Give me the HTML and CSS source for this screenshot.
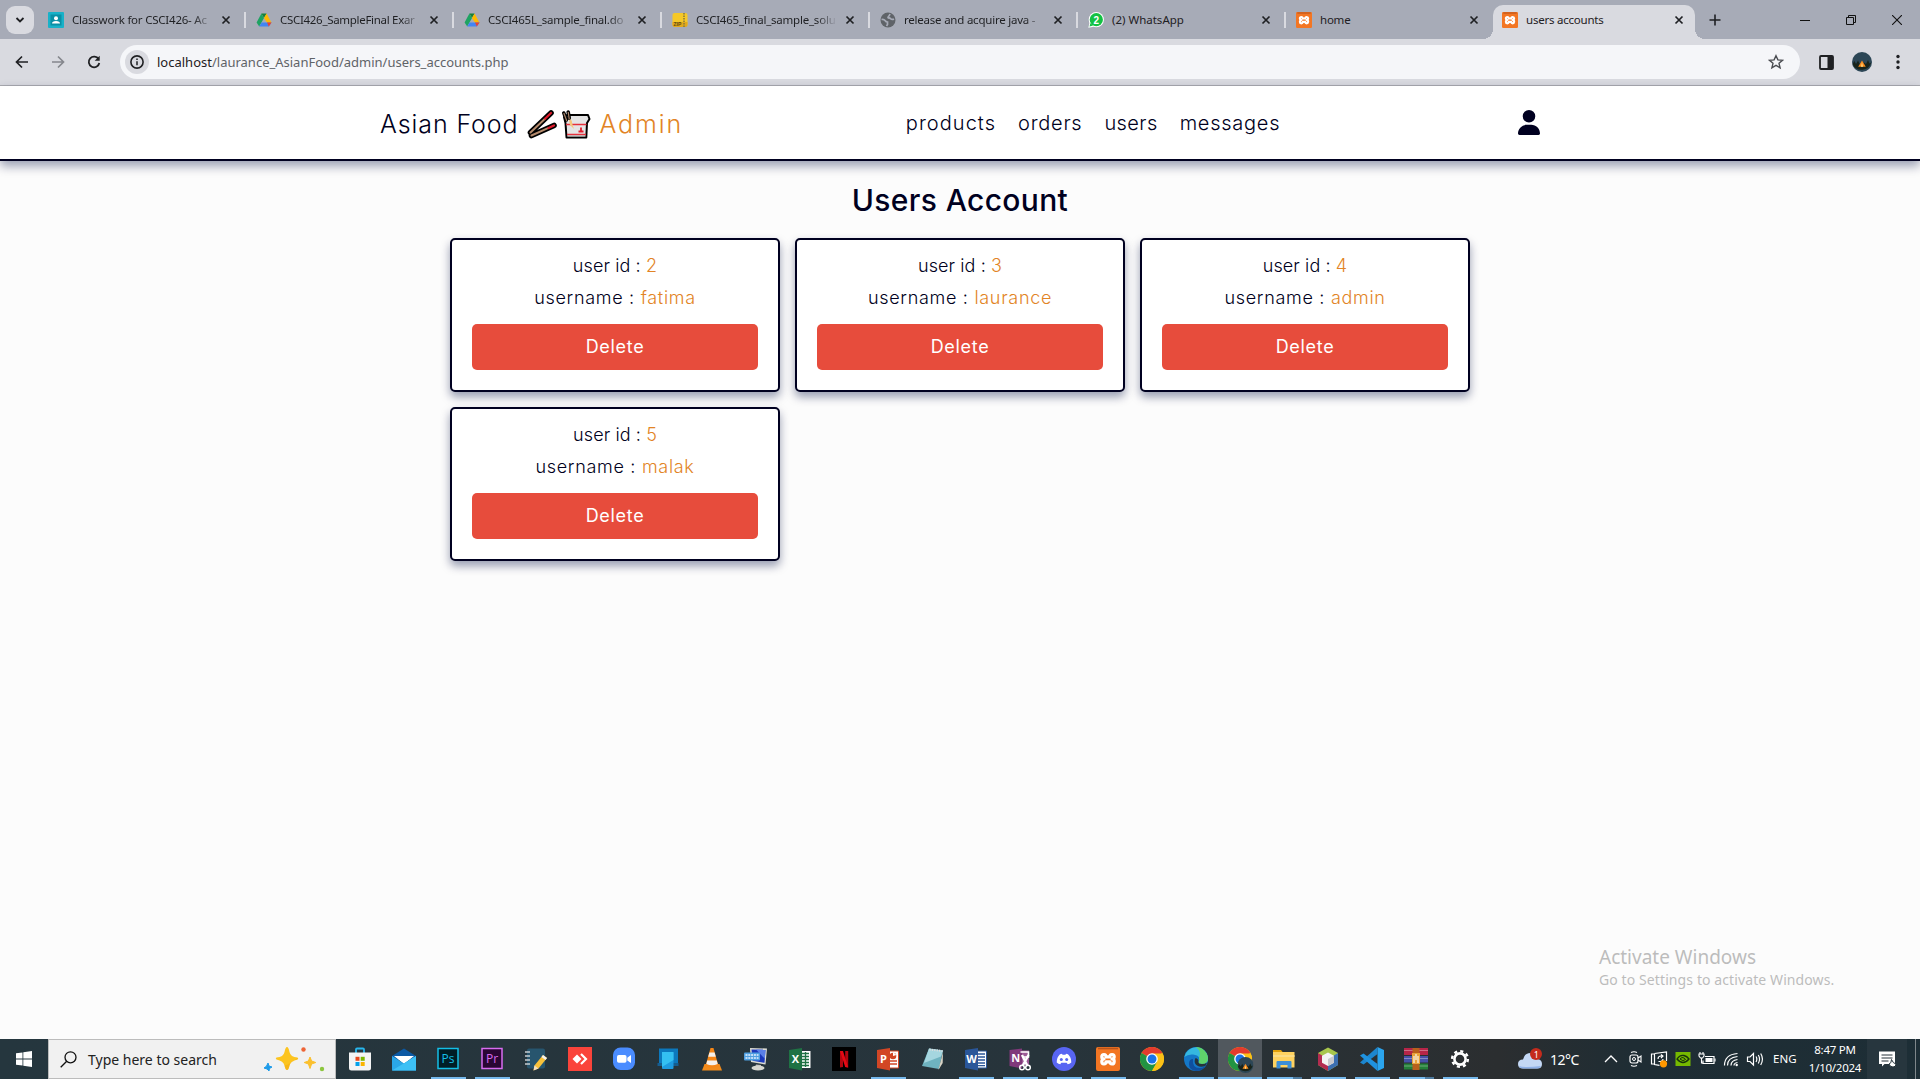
FILE: index.html
```
<!DOCTYPE html>
<html lang="en">
<head>
<meta charset="utf-8">
<title>users accounts</title>
<link rel="stylesheet" href="styles.css">
</head>
<body>
<svg class="defs" width="0" height="0">
  <symbol id="close" viewBox="0 0 10 10"><path d="M1.5 1.5l7 7M8.5 1.5l-7 7" stroke="#1f2023" stroke-width="1.7" fill="none"/></symbol>
  <symbol id="drive" viewBox="0 0 16 16"><path d="M5.4 1.5h5.2L8 6z" fill="#188038"/><path d="M5.4 1.5L0.6 10.5 3.2 14.5 8 6z" fill="#1ea362"/><path d="M10.6 1.5L8 6l3.2 5h4.4z" fill="#ffba00"/><path d="M3.2 14.5h9.6l2.7-4H5.6z" fill="#4285f4"/><path d="M11 10.5h4.5l-2.7 4z" fill="#ea4335"/></symbol>
  <symbol id="xampp" viewBox="0 0 24 24"><rect width="24" height="24" rx="2" fill="#f37623"/><path d="M2 1.5h20" stroke="#b9541b" stroke-width="1.6"/><path d="M8 7.5q-2.200 0-2.200 2.200T8 12q-2.200.2-2.200 2.500T8 17q2 0 2-2.200h4q0 2.200 2 2.200t2.200-2.500T16 12q2.200-.2 2.200-2.300T16 7.500t-2 2.300h-4q0-2.300-2-2.300z" fill="none" stroke="#fff" stroke-width="3.200" stroke-linejoin="round"/></symbol>
  <symbol id="chrome" viewBox="0 0 24 24"><circle cx="12" cy="12" r="12" fill="#fbc116"/><path d="M12 12L1.600 6A12 12 0 0 1 22.400 6z" fill="#e33b2e"/><path d="M1.600 6A12 12 0 0 0 12 24l5.200-9z" fill="#229342"/><path d="M12 6.500h10.700A12 12 0 0 1 12 24l5-9z" fill="#fbc116"/><circle cx="12" cy="12" r="5.800" fill="#fff"/><circle cx="12" cy="12" r="4.500" fill="#1a73e8"/></symbol>
  <symbol id="camp" viewBox="0 0 20 20"><circle cx="10" cy="10" r="10" fill="#2c4656"/><path d="M.5 12l2-3 1.500 3 2-3.500 2 4 4-2 2 1.500 2-4 1.500 3.500 1.700-1A10 10 0 0 1 .5 12z" fill="#18241b"/><path d="M10 8.500l3.800 6.300H6.200z" fill="#f58a1d"/><path d="M10 10.500l1 4.300H9z" fill="#ffe08a"/></symbol>
</svg>

<div class="tabstrip">
  <div class="tabsearch"><svg width="10" height="8" viewBox="0 0 10 8"><path d="M1.500 2L5 5.500 8.500 2" fill="none" stroke="#1f2023" stroke-width="1.800"/></svg></div>
  <div class="tab"><svg class="fav" viewBox="0 0 16 16"><rect width="16" height="16" rx="1" fill="#18b1c8"/><rect x="2.500" y="2.500" width="11" height="11" fill="#0b8fa5"/><circle cx="8" cy="6.200" r="2" fill="#fff"/><path d="M4 11.500q0-2.500 4-2.500t4 2.500z" fill="#fff"/></svg><span class="tt fade">Classwork for CSCI426- Ac</span><svg class="x"><use href="#close"/></svg></div>
  <div class="tab"><svg class="fav"><use href="#drive"/></svg><span class="tt fade tight">CSCI426_SampleFinal Exar</span><svg class="x"><use href="#close"/></svg></div>
  <div class="tab"><svg class="fav"><use href="#drive"/></svg><span class="tt fade">CSCI465L_sample_final.do</span><svg class="x"><use href="#close"/></svg></div>
  <div class="tab"><svg class="fav" viewBox="0 0 16 16"><rect x=".5" y="1" width="15" height="13.500" rx="2" fill="#f5c828"/><path d="M.5 10h15v3q0 2-2 2h-11q-2 0-2-2z" fill="#e2a91b"/><path d="M12 1v14" stroke="#8a7a3a" stroke-width="1.600" stroke-dasharray="1.500 1"/><text x="1.500" y="14" class="zip">ZIP</text></svg><span class="tt fade">CSCI465_final_sample_solu</span><svg class="x"><use href="#close"/></svg></div>
  <div class="tab"><svg class="fav" viewBox="0 0 16 16"><circle cx="8" cy="8" r="7.500" fill="#5f6368"/><path d="M1.500 7.500q2.500-.5 3.500 1t2.500 1.500v2.500L6.500 14M14 7q-2 1-3.500-.3T8.500 6q-1-.5 0-1.500T10 2" stroke="#a7abb7" stroke-width="1.700" fill="none"/></svg><span class="tt fade">release and acquire java -</span><svg class="x"><use href="#close"/></svg></div>
  <div class="tab"><svg class="fav" viewBox="0 0 16 16"><circle cx="8.300" cy="7.700" r="7.600" fill="#fff"/><path d="M.3 15.800l1.300-5 4 4z" fill="#fff"/><circle cx="8.300" cy="7.700" r="6.600" fill="#13c143"/><path d="M1.500 14.600l1-3.600 2.600 2.600z" fill="#13c143"/><text x="8.300" y="11.500" class="badge2">2</text></svg><span class="tt wide">(2) WhatsApp</span><svg class="x"><use href="#close"/></svg></div>
  <div class="tab nosep"><svg class="fav"><use href="#xampp"/></svg><span class="tt">home</span><svg class="x"><use href="#close"/></svg></div>
  <div class="tab active"><svg class="fav"><use href="#xampp"/></svg><span class="tt">users accounts</span><svg class="x"><use href="#close"/></svg></div>
  <svg class="plus" width="12" height="12" viewBox="0 0 12 12"><path d="M6 .5v11M.5 6h11" stroke="#1f2023" stroke-width="1.600"/></svg>
  <div class="winctl">
    <svg width="10" height="10"><path d="M0 5.500h10" stroke="#111"/></svg>
    <svg width="10" height="10"><path d="M.5 2.500h7v7h-7zM2.500 2.500v-2h7v7h-2" fill="none" stroke="#111"/></svg>
    <svg width="10" height="10"><path d="M0 0l10 10M10 0L0 10" stroke="#111" stroke-width="1.100"/></svg>
  </div>
</div>

<div class="toolbar">
  <svg class="nav" viewBox="0 0 14 14"><path d="M13 7H1.800M7 1.500L1.500 7 7 12.500" fill="none" stroke="#1f2023" stroke-width="1.700"/></svg>
  <svg class="nav" viewBox="0 0 14 14"><path d="M1 7h11.200M7 1.500L12.500 7 7 12.500" fill="none" stroke="#85878d" stroke-width="1.700"/></svg>
  <svg class="nav" viewBox="0 0 14 14"><path d="M11.600 4.200A5.300 5.300 0 1 0 12.300 8" fill="none" stroke="#1f2023" stroke-width="1.800"/><path d="M12.700.8v5H7.700z" fill="#1f2023"/></svg>
  <div class="omnibox">
    <span class="info"><svg width="14" height="14" viewBox="0 0 14 14"><circle cx="7" cy="7" r="6.100" fill="none" stroke="#1f2023" stroke-width="1.600"/><path d="M7 6.200v4M7 3.400v1.700" stroke="#1f2023" stroke-width="1.500"/></svg></span>
    <span class="url"><b>localhost</b>/laurance_AsianFood/admin/users_accounts.php</span>
    <svg class="star" width="16" height="16" viewBox="0 0 16 16"><path d="M8 1.700l1.900 4.200 4.600.4-3.500 3 1.100 4.500L8 11.400l-4.100 2.400L5 9.300l-3.500-3 4.600-.4z" fill="none" stroke="#4a4c51" stroke-width="1.400"/></svg>
  </div>
  <svg width="15" height="15" viewBox="0 0 15 15"><rect x="1" y="1" width="13" height="13" rx="1" fill="none" stroke="#1f2023" stroke-width="1.800"/><path d="M8.500 1H14v13H8.500z" fill="#1f2023"/></svg>
  <svg class="avatar" width="20" height="20"><use href="#camp"/></svg>
  <svg class="dots" width="4" height="16" viewBox="0 0 4 16"><g fill="#1f2023"><circle cx="2" cy="2.500" r="1.700"/><circle cx="2" cy="8" r="1.700"/><circle cx="2" cy="13.500" r="1.700"/></g></svg>
</div>

<header class="header">
  <div class="bar">
    <a class="logo"><span class="l1">Asian Food</span>
      <svg width="30" height="30" viewBox="0 0 30 30"><path d="M3.500 23.500L24 4M4.500 26.500L27 16.500" stroke="#000" stroke-width="5.600" stroke-linecap="round"/><path d="M3.500 23.500L18 9.700M4.500 26.500L21 19.200" stroke="#b58a6c" stroke-width="2" stroke-linecap="round"/><path d="M18 9.700L24 4M21.500 19L27 16.500" stroke="#e01b2c" stroke-width="2.200" stroke-linecap="round"/></svg>
      <svg class="box" width="30" height="30" viewBox="0 0 30 30"><path d="M3 8L6 6h21l1.500 4-2.500 4-.7 14.500H5.500L4.500 14z" fill="#e4e4e4" stroke="#000" stroke-width="2" stroke-linejoin="round"/><path d="M5 15.500h20.500M6 25.500h19" stroke="#e5303c" stroke-width="1.400"/><path d="M6.500 27h18" stroke="#aaa"/><path d="M7.500 9q4 2 3.500 5l2 6-4-4-1-5z" fill="#f5c77c"/><path d="M2.800 4l2.500 7M7.200 3l1 6" stroke="#000" stroke-width="3.600" stroke-linecap="round"/><path d="M2.800 4l3 8M7.200 3l1 7" stroke="#a98469" stroke-width="1.200"/><path d="M20 18.500v3M17.500 22.500h5" stroke="#e01b2c" stroke-width="1.800"/></svg>
      <span class="l2">Admin</span></a>
    <nav class="links"><a class="n-products">products</a><a class="n-orders">orders</a><a class="n-users">users</a><a class="n-messages">messages</a></nav>
    <svg class="person" width="22" height="25" viewBox="0 0 448 512" preserveAspectRatio="none"><path d="M224 256A128 128 0 1 0 224 0a128 128 0 1 0 0 256zm-45.700 48C79.800 304 0 383.800 0 482.300 0 498.700 13.300 512 29.700 512h388.600c16.400 0 29.700-13.300 29.700-29.700C448 383.800 368.200 304 269.700 304z" fill="#000020"/></svg>
  </div>
</header>

<main class="page">
  <h1>Users Account</h1>
  <div class="cards">
    <div class="card"><p class="uid">user id : <i>2</i></p><p>username : <i>fatima</i></p><a class="del">Delete</a></div>
    <div class="card"><p class="uid">user id : <i>3</i></p><p>username : <i>laurance</i></p><a class="del">Delete</a></div>
    <div class="card"><p class="uid">user id : <i>4</i></p><p>username : <i>admin</i></p><a class="del">Delete</a></div>
    <div class="card"><p class="uid">user id : <i>5</i></p><p>username : <i>malak</i></p><a class="del">Delete</a></div>
  </div>
  <div class="activate"><div class="a1">Activate Windows</div><div class="a2">Go to Settings to activate Windows.</div></div>
</main>

<footer class="taskbar">
  <div class="start"><svg width="16" height="16" viewBox="0 0 16 16"><path d="M0 2.300l6.500-.9v6.200H0zM7.300 1.300L16 0v7.600H7.300zM0 8.400h6.500v6.200L0 13.700zM7.300 8.400H16V16l-8.700-1.300z" fill="#fff"/></svg></div>
  <div class="search">
    <svg width="17" height="17" viewBox="0 0 17 17"><circle cx="10.500" cy="6.300" r="5.500" fill="none" stroke="#111" stroke-width="1.300"/><path d="M6.700 10.300L.7 16.300" stroke="#111" stroke-width="1.300"/></svg>
    <span>Type here to search</span>
    <svg class="spark" width="62" height="26" viewBox="0 0 62 26"><path d="M24 1q1.500 0 2.500 5t8 5.500q1.500 1-0 2-7 1.500-8 6T24 24t-2.500-4.500-8-6q-1.500-1 0-2 7-.5 8-5.500T24 1z" fill="#fcc41f"/><path d="M34.500 12q.5 1-.5 1.500-6.500 1.500-7.500 6T24 24q-1.500 0-2.500-4.500 5-1 13-7.500z" fill="#f3ae12" opacity=".6"/><path d="M47 11l1.600 4 4.200 1.500-4.200 1.500-1.600 4.500-1.600-4.500-4.200-1.500 4.200-1.500z" fill="#fbc02d" stroke="#fbc02d"/><path d="M5 17l1 3 3 1-2.500 1.500L6 25l-2-2-3-1 2.500-1.800z" fill="#1e9be9" stroke="#1e9be9" stroke-linejoin="round"/><circle cx="40.500" cy="3.500" r="2.200" fill="#ee6436"/><circle cx="59" cy="23" r="2.200" fill="#8cc63e"/></svg>
  </div>
  <div class="apps">
    <span class="app"><svg viewBox="0 0 24 24"><path d="M8 6V2.500q0-1 1-1h6q1 0 1 1V6" fill="none" stroke="#27b7ee" stroke-width="1.800"/><path d="M1 5.500h22V21q0 2.500-2.500 2.500h-17Q1 23.500 1 21z" fill="#f4f4f4"/><path d="M7.500 9.800h4v4h-4z" fill="#e8481c"/><path d="M12.700 9.800h4v4h-4z" fill="#7cb701"/><path d="M7.500 15h4v4h-4z" fill="#04a1ea"/><path d="M12.700 15h4v4h-4z" fill="#fbb400"/></svg></span>
    <span class="app"><svg viewBox="0 0 24 24"><path d="M0 9L12 1.500 24 9v4H0z" fill="#0c59a4"/><path d="M2 9h20l-10 8z" fill="#fff"/><path d="M0 9l12 7.500L24 9v14.500H0z" fill="#2aa7e8"/><path d="M0 23.500L24 9v14.500z" fill="#3dc0f5"/></svg></span>
    <span class="app on"><svg viewBox="0 0 24 24"><rect x="2" y="1.500" width="20" height="20" fill="#001d26" stroke="#14bfe6" stroke-width="1.500"/><text x="12" y="15.500" class="adobe" fill="#14bfe6">Ps</text></svg></span>
    <span class="app on"><svg viewBox="0 0 24 24"><rect x="2" y="1.500" width="20" height="20" fill="#2a0634" stroke="#d86cf0" stroke-width="1.500"/><text x="12" y="15.500" class="adobe" fill="#d86cf0">Pr</text></svg></span>
    <span class="app"><svg viewBox="0 0 24 24"><rect x="3" y="1.500" width="18" height="20" rx="2" fill="#27556e"/><path d="M1 5h5M1 9h5M1 13h5M1 17h5" stroke="#c5ccd0" stroke-width="1.700"/><path d="M10.500 18.500L19 8l4 3-8.500 10.500-5 2z" fill="#f8c13a"/><path d="M19 8l4 3-1.500 2-4-3z" fill="#f2f2f2"/><path d="M10.500 18.500l4 3-5 2z" fill="#f3dfc0"/></svg></span>
    <span class="app"><svg viewBox="0 0 24 24"><rect width="24" height="24" fill="#fa443b"/><path d="M4.500 12L9 7.500l4.500 4.500L9 16.500z" fill="#fff"/><path d="M13 7l5 5-5 5" stroke="#fff" stroke-width="2.200" fill="none"/></svg></span>
    <span class="app"><svg viewBox="0 0 24 24"><rect x="1" y=".5" width="22" height="22.500" rx="7.500" fill="#4a8cff"/><rect x="5" y="8" width="9.500" height="7.800" rx="1.800" fill="#fff"/><path d="M15.300 10.800L19 8v8l-3.700-2.500z" fill="#fff"/></svg></span>
    <span class="app"><svg viewBox="0 0 24 24"><path d="M3 1.500h19v15H3z" fill="#0c78bd"/><path d="M1.500 16h21v3h-21z" fill="#155d90"/><rect x="6" y="5" width="11.500" height="17" rx="1" fill="#1e9be0"/><path d="M6 5h11.500v8L6 20z" fill="#34c0f2"/></svg></span>
    <span class="app"><svg viewBox="0 0 24 24"><path d="M4.500 17h15l2.500 6.500H2z" fill="#f28b1a"/><path d="M10.500 1h3L18.500 19q-6.500 3-13 0z" fill="#f58616"/><path d="M9.400 5.500h5.200l1.200 4.200H8.200zM7.200 13.500h9.600l.9 3.500q-5.700 2.500-11.400 0z" fill="#f5f0ea"/></svg></span>
    <span class="app"><svg viewBox="0 0 24 24"><path d="M6 1l17 .5-1.500 16L7 15z" fill="#dcdcd4"/><path d="M7.500 2.500l14 .3-1 13-12-2z" fill="#1b38bb"/><path d="M12 2.600l9.500.2-.7 9z" fill="#5a7fe8"/><rect x="0" y="5.500" width="16" height="8" rx="1" fill="#4f9fe0"/><path d="M1.500 8h13M1.500 11h13" stroke="#e9f4ff" stroke-width="1.600" stroke-dasharray="2 .8"/><path d="M12 17.500l5 .5v3H11z" fill="#bbb"/><ellipse cx="14" cy="21" rx="6.500" ry="2.500" fill="#d6d6cf"/></svg></span>
    <span class="app"><svg viewBox="0 0 24 24"><path d="M11 4h11.500v17H11z" fill="#fff"/><path d="M14 6.500h7M14 9.500h7M14 12.500h7M14 15.500h7M14 18.500h7M17.500 5v15" stroke="#1f7244" stroke-width="1.300"/><path d="M1 3L14 1v22.500L1 21z" fill="#1f7244"/><text x="7.500" y="16" class="office">X</text></svg></span>
    <span class="app"><svg viewBox="0 0 24 24"><rect width="24" height="24" fill="#000"/><path d="M8 4h3v16l-3 .4zM13.200 4h3v16.400l-3-.4z" fill="#b1060f"/><path d="M8 4h3l5.200 16.400-3-.4z" fill="#e50914"/></svg></span>
    <span class="app on"><svg viewBox="0 0 24 24"><path d="M11 4h11.500v17H11z" fill="#fff" stroke="#d24625"/><path d="M14 14h7M14 17h7" stroke="#d24625" stroke-width="1.300"/><circle cx="17" cy="9" r="3.300" fill="#d24625"/><path d="M17 9V5l3.500 3z" fill="#fff"/><path d="M1 3L14 1v22.500L1 21z" fill="#d24625"/><text x="7.500" y="16" class="office">P</text></svg></span>
    <span class="app"><svg viewBox="0 0 24 24"><path d="M9 1.500l14 2-4 18.500-17-3z" fill="#6fb3c0"/><path d="M9 1.500l14 2-2 6L4 16z" fill="#a5d6df"/><path d="M1.500 19l17 3.500L23 5l-.3 11-4 6.500z" fill="#d8d3c5"/><path d="M9.500 2.500l13 1.500" stroke="#ddd" stroke-width="2" stroke-dasharray="1.200 1.200"/></svg></span>
    <span class="app on"><svg viewBox="0 0 24 24"><path d="M11 4h11.500v17H11z" fill="#fff" stroke="#2a5699"/><path d="M14 7h7M14 10h7M14 13h7M14 16h7M14 18.700h7" stroke="#2a5699" stroke-width="1.300"/><path d="M1 3L14 1v22.500L1 21z" fill="#2a5699"/><text x="7.500" y="16" class="office">W</text></svg></span>
    <span class="app on"><svg viewBox="0 0 24 24"><path d="M12 3.500h9v15h-9z" fill="#9c5a95"/><path d="M1.500 3L14 1.500v20L1.500 19z" fill="#80397b"/><text x="7.700" y="15" class="office">N</text><path d="M12.500 5h8v5h-6" fill="none" stroke="#fff" stroke-width="1.600"/><path d="M14 8l5.500 11M20.500 8l-6 11" stroke="#fff" stroke-width="2.400"/><circle cx="14" cy="20.500" r="2.300" fill="none" stroke="#fff" stroke-width="1.500"/><circle cx="20" cy="20.500" r="2.300" fill="none" stroke="#fff" stroke-width="1.500"/></svg></span>
    <span class="app on"><svg viewBox="0 0 24 24"><circle cx="12" cy="12" r="12" fill="#5865f2"/><path d="M8 7.200l2-.5.500 1h3l.5-1 2 .5q3.300 3 3.300 8.300-1.800 1.500-3.600 1.800l-1-1.600H9.300l-1 1.600q-1.800-.3-3.600-1.800Q4.700 10.200 8 7.200z" fill="#fff"/><circle cx="9.300" cy="12.500" r="1.500" fill="#5865f2"/><circle cx="14.700" cy="12.500" r="1.500" fill="#5865f2"/></svg></span>
    <span class="app on"><svg><use href="#xampp"/></svg></span>
    <span class="app"><svg><use href="#chrome"/></svg></span>
    <span class="app on"><svg viewBox="0 0 24 24"><circle cx="12" cy="12" r="12" fill="#1478c8"/><path d="M.3 10A12 12 0 0 1 24 11q0 6-6 6-4 0-3.500-2.500 1.500-1.500.5-4T9 7.500 .3 10z" fill="#35b8e0"/><path d="M12 0a12 12 0 0 1 12 11q0 6-6 6-4 0-3.500-2.500 1.500-1.500.5-4Q18 5 12 0z" fill="#5fd36b"/><path d="M9 12q-1 9 6.500 9 3.500 0 6.500-2.500Q18.500 24 12 24 5 23 5 17q0-5 4-5z" fill="#0f4f9e"/><path d="M14.500 14.500Q14 17 18 17q3 0 5-1.500l-1.200 3Q17 21 13 18.500T11.500 11q3 .5 3 3.500z" fill="#26343b"/></svg></span>
    <span class="app on cur"><svg viewBox="0 0 24 24"><use href="#chrome" width="24" height="24"/><use href="#camp" x="9.500" y="10" width="16" height="16"/></svg></span>
    <span class="app on two"><svg viewBox="0 0 24 24"><path d="M1 3h8l2 2.500H1z" fill="#e3a008"/><path d="M1 5h21.500v15.500H1z" fill="#ffd260"/><path d="M1 8h21.500v2H1z" fill="#fbdc86"/><path d="M4.500 21.500V15q0-1 1-1h13q1 0 1 1v6.500h-4V18h-7v3.500z" fill="#3c8ed6"/></svg></span>
    <span class="app on"><svg viewBox="0 0 24 24"><path d="M12 .5L22 6v12l-10 6L2 18V6z" fill="#a8c64c"/><path d="M2 6l10 6v12L2 18z" fill="#b32c50"/><path d="M22 6l-10 6v12l10-6z" fill="#3c6fb0"/><path d="M12 5.500l6 3.200v7L12 19l-6-3.300v-7z" fill="#f3f3f3"/><path d="M12 12l6-3.300v7L12 19z" fill="#c9c9cc"/></svg></span>
    <span class="app on"><svg viewBox="0 0 24 24"><path d="M17.500 0L24 3v18l-6.500 3z" fill="#2ba5ee"/><path d="M17.500 0v7L3.500 17.500 0 15.500z" fill="#1c86cf"/><path d="M17.500 24v-7L3.500 6.500 0 8.500z" fill="#1f92df"/></svg></span>
    <span class="app on two"><svg viewBox="0 0 24 24"><rect y="1" width="24" height="7" fill="#b62548"/><rect y="9" width="24" height="6.500" fill="#4650a8"/><rect y="16.500" width="24" height="6" fill="#24803a"/><path d="M0 3.500h24M0 11.500h24M0 19h24" stroke="#ffffff55"/><path d="M8.500 1h7v22h-7z" fill="#b8601d"/><path d="M8 6h8v11H8z" fill="#e9a23b"/><path d="M10 9v7M12 7v6M14 9v7" stroke="#f8f0e0" stroke-width="1.300"/></svg></span>
    <span class="app on"><svg viewBox="0 0 24 24"><circle cx="12" cy="12" r="5.600" fill="none" stroke="#fff" stroke-width="2.600"/><circle cx="12" cy="12" r="7.900" fill="none" stroke="#fff" stroke-width="2.400" stroke-dasharray="3.100 3.100"/></svg></span>
  </div>
  <div class="weather"><svg width="26" height="22" viewBox="0 0 26 22"><path d="M6 20.500Q1 20.500 1 16t5-4.500Q7.500 5 13.500 5q5 0 6.500 6 5 .3 5 5t-5 4.500z" fill="#c4d8f5"/><path d="M2 18q5 2 22 0-1 2.500-4 2.500H6Q3 20.500 2 18z" fill="#8fb1e8"/><circle cx="19" cy="6" r="6" fill="#c42b1c"/><text x="19" y="9.500" class="n1">1</text></svg><span>12°C</span></div>
  <div class="tray">
    <svg viewBox="0 0 18 18"><path d="M3 12l6-6 6 6" fill="none" stroke="#fff" stroke-width="1.300"/></svg>
    <svg viewBox="0 0 18 18"><rect x="4" y="5" width="8" height="8" rx="2" fill="none" stroke="#fff" stroke-width="1.200"/><circle cx="8" cy="9" r="1.500" fill="none" stroke="#fff"/><path d="M12 8l3-2v6l-3-2M5 2.500q3-1.500 6 0M5 15.500q3 1.500 6 0" fill="none" stroke="#fff" stroke-width="1.100"/></svg>
    <svg viewBox="0 0 18 18"><path d="M4.500 3.500l12-1.500v9M4.500 3.500v11l5 .8M4.500 4h-3v10h3" fill="none" stroke="#fff" stroke-width="1.200"/><path d="M8 9q0-3 3-3h1.500M11 4.500L13 6l-2 2M13 9q0 2-2.500 2.500H8.500" fill="none" stroke="#fff" stroke-width="1.100"/><circle cx="13.500" cy="13.800" r="3.600" fill="#ff9800"/></svg>
    <svg viewBox="0 0 18 18"><rect x="1.500" y="2" width="15" height="14" fill="#76b900"/><path d="M3 9q3-4.500 7-3.500 3 .8 5 3.500-3 3.500-6 3.500T3 9z" fill="none" stroke="#16320a" stroke-width="1.300"/><path d="M6 9q2-2.500 4-1t1.500 1.500Q9 12 6 9z" fill="none" stroke="#16320a"/></svg>
    <svg viewBox="0 0 18 18"><path d="M7 6.500h9v7H5v-3" fill="none" stroke="#fff" stroke-width="1.200"/><path d="M7.500 8h7v4h-7z" fill="#fff"/><path d="M17 8.500v3M2 4v-2M5 4v-2M1 4h5v2L4.500 8h-2L1 6zM3.500 8v5H5" stroke="#fff" fill="none" stroke-width="1.100"/></svg>
    <svg viewBox="0 0 18 18"><g fill="none" stroke="#fff" stroke-width="1.200"><path d="M2.500 15.500Q2.500 4.500 15.500 3.500M5.500 15.500q0-8 10-9M9 15.500q0-5 6.500-6M12 15.500q0-2.500 3.500-3"/></g><circle cx="14.700" cy="15" r="1.200" fill="#fff"/></svg>
    <svg viewBox="0 0 18 18"><path d="M1.500 7v4.500H4l3.500 3.500V3.500L4 7zM10 6.500q1.700 2.500 0 5.500M12.300 5q2.500 4 0 8.500M14.700 3.500q3.500 5.500 0 11.500" fill="none" stroke="#fff" stroke-width="1.200"/></svg>
  </div>
  <span class="lang">ENG</span>
  <div class="clock"><span>8:47 PM</span><span>1/10/2024</span></div>
  <div class="notif"><svg width="17" height="17" viewBox="0 0 17 17"><path d="M0 .5h16v12.500H5.500L3 15.500V13H0z" fill="#fff"/><path d="M2.500 4h11M2.500 7h11M2.500 10h7" stroke="#26333a" stroke-width="1.200"/><path d="M12.500 8.500q0 4-2.500 4.500 1 3 4 3t3-3q-3-.5-4.500-4.500z" fill="#fff" stroke="#26333a"/></svg></div>
  <div class="peek"></div>
</footer>
</body>
</html>
```
FILE: styles.css
```
* { box-sizing: border-box; }
body {
  margin: 0;
  height: 1079px;
  overflow: hidden;
  display: flex;
  flex-direction: column;
  background: #fcfcfc;
  font-family: "Noto Sans", sans-serif;
  color: #000020;
}
svg { display: block; flex: none; }
.defs { position: absolute; }

/* browser tab strip */
.tabstrip {
  height: 39px;
  flex: none;
  background: #a7abb7;
  display: flex;
  align-items: center;
  padding-left: 6px;
  color: #1f2023;
}
.tabsearch {
  width: 28px;
  height: 28px;
  border-radius: 9px;
  background: #d9dae0;
  display: grid;
  place-items: center;
  margin-right: 4px;
}
.tab {
  width: 208px;
  height: 16px;
  padding: 0 13px 0 10px;
  display: flex;
  align-items: center;
  border-right: 2px solid #d9dae0;
  font-size: 11.5px;
}
.tab.nosep { border-right-color: transparent; }
.tab.active {
  width: 202px;
  height: 34px;
  margin: 5px 0 0 -1px;
  padding: 0 11px 5px 9px;
  border: 0;
  border-radius: 10px 10px 0 0;
  background: #d9dae0;
  position: relative;
}
.tab.active::before, .tab.active::after {
  content: "";
  position: absolute;
  bottom: 0;
  width: 10px;
  height: 10px;
}
.tab.active::before { left: -10px; background: radial-gradient(circle at 0 0, transparent 10px, #d9dae0 10px); }
.tab.active::after { right: -10px; background: radial-gradient(circle at 100% 0, transparent 10px, #d9dae0 10px); }
.fav { width: 16px; height: 16px; }
.x { width: 10px; height: 10px; }
.tt { flex: 1; margin: 0 8px; white-space: nowrap; line-height: 16px; letter-spacing: -.22px; }
.tt.tight { letter-spacing: -.3px; }
.tt.wide { letter-spacing: 0; }
.fade { -webkit-mask-image: linear-gradient(90deg, #000 86%, transparent); mask-image: linear-gradient(90deg, #000 86%, transparent); }
.zip { font: bold 5px "Liberation Sans", sans-serif; fill: #5b4a12; }
.badge2 { font: bold 10px "Liberation Sans", sans-serif; fill: #fff; text-anchor: middle; }
.plus { margin-left: 14px; }
.winctl { margin-left: auto; display: flex; gap: 36px; padding-right: 18px; }

/* browser toolbar */
.toolbar {
  height: 47px;
  flex: none;
  background: #d9dae0;
  border-bottom: 1px solid #abacb0;
  display: flex;
  align-items: center;
  padding: 0 20px 0 15px;
}
.nav { width: 14px; height: 14px; margin-right: 22px; }
.omnibox {
  width: 1680px;
  height: 34px;
  margin: 0 19px 0 -3px;
  padding: 0 16px 0 5px;
  border-radius: 17px;
  background: #f5f6f9;
  display: flex;
  align-items: center;
}
.info { width: 24px; height: 24px; border-radius: 12px; background: #d9dae0; display: grid; place-items: center; }
.url { margin-left: 8px; font-size: 13px; color: #5f6368; }
.url b { font-weight: 400; color: #1f2023; }
.star { margin-left: auto; }
.avatar { margin-left: 18px; }
.dots { margin-left: 24px; }

/* site header */
.header {
  height: 75px;
  flex: none;
  background: #fff;
  border-bottom: 2px solid #000020;
  box-shadow: 0 5px 10px rgba(0, 16, 64, .4);
  font-family: Inter, sans-serif;
  font-weight: 300;
}
.bar {
  width: 1160px;
  height: 73px;
  margin: 0 auto;
  display: flex;
  align-items: center;
  justify-content: space-between;
}
.logo { display: flex; align-items: center; font-size: 25px; padding-top: 2px; }
.logo svg { margin-left: 9px; }
.logo .box { margin: 0 8px 0 4px; }
.l1 { letter-spacing: .9px; }
.l2 { letter-spacing: 1.9px; }
.l2, i { color: #e28425; font-style: normal; }
.links { display: flex; gap: 22px; font-size: 20px; }
.n-products { letter-spacing: 1.05px; }
.n-orders { letter-spacing: .75px; }
.n-users { letter-spacing: .4px; }
.n-messages { letter-spacing: .75px; }
.person { margin-left: 15px; }

/* accounts */
.page { flex: 1; min-height: 0; position: relative; font-family: Inter, sans-serif; font-weight: 300; }
h1 { margin: 20px 0 0; height: 38px; line-height: 38px; font-size: 30px; font-weight: 500; text-align: center; letter-spacing: .35px; }
.cards {
  width: 1020px;
  margin: 19px auto 0;
  display: grid;
  grid-template-columns: repeat(3, 330px);
  gap: 15px;
}
.card {
  height: 154px;
  padding: 10px 20px 20px;
  border: 2px solid #000020;
  border-radius: 5px;
  background: #fff;
  box-shadow: 0 5px 10px rgba(0, 16, 64, .4);
  text-align: center;
  font-size: 18px;
}
.card p { margin: 0; line-height: 32px; letter-spacing: .7px; }
.card .uid { letter-spacing: .1px; }
.del {
  display: block;
  margin-top: 10px;
  height: 46px;
  line-height: 46px;
  border-radius: 5px;
  background: #e74c3c;
  color: #fff;
  font-weight: 400;
  letter-spacing: .7px;
}
.activate { position: absolute; left: 1599px; bottom: 49px; font-family: "Noto Sans", sans-serif; font-weight: 400; color: #bcbcbc; }
.a1 { font-size: 19px; line-height: 26px; }
.a2 { font-size: 14px; line-height: 20px; letter-spacing: .1px; }

/* taskbar */
.taskbar {
  height: 40px;
  flex: none;
  display: flex;
  background: linear-gradient(90deg, #25363e, #27343b 55%, #2b2e30 78%, #1f2d34 85%, #1d2e36);
  color: #fff;
}
.taskbar > * { flex: none; }
.start { width: 48px; display: grid; place-items: center; }
.search {
  width: 288px;
  padding: 0 10px 0 11px;
  border: 1px solid #bcbcbc;
  background: #f1f1f1;
  color: #222;
  display: flex;
  align-items: center;
  font-size: 14px;
}
.search span { margin-left: 11px; }
.spark { margin-left: auto; }
.apps { display: flex; padding-left: 2px; }
.app { width: 44px; height: 40px; display: grid; place-items: center; position: relative; }
.app svg { width: 24px; height: 24px; overflow: visible; }
.adobe { font: 500 12px "Open Sans", sans-serif; text-anchor: middle; }
.office { font: bold 11px "Open Sans", sans-serif; fill: #fff; text-anchor: middle; }
.on::after { content: ""; position: absolute; left: 5px; bottom: 0; width: 35px; height: 2px; background: #76b9ed; }
.cur { background: #51585e; }
.cur::after { left: 0; width: 44px; }
.two::after { background: linear-gradient(90deg, #76b9ed 26px, #4e7ba0 26px); }
.weather { margin-left: 35px; width: 87px; display: flex; align-items: center; gap: 7px; font-size: 14px; letter-spacing: -.5px; }
.n1 { font: 9px "Noto Sans", sans-serif; fill: #fff; text-anchor: middle; }
.tray { display: flex; align-items: center; gap: 6px; margin-left: -2px; }
.tray svg { width: 18px; height: 18px; }
.lang { font-size: 11.5px; line-height: 40px; margin-left: 9px; width: 37px; }
.clock { width: 52px; margin-left: -1px; display: flex; flex-direction: column; align-items: center; font-size: 11.5px; letter-spacing: -.25px; line-height: 18px; padding-top: 2px; }
.notif { width: 40px; display: grid; place-items: center; background: #27363e; margin-left: auto; }
.peek { width: 13px; background: linear-gradient(90deg, transparent 8px, #7f878b 8px, #7f878b 9px, transparent 9px); }
```
